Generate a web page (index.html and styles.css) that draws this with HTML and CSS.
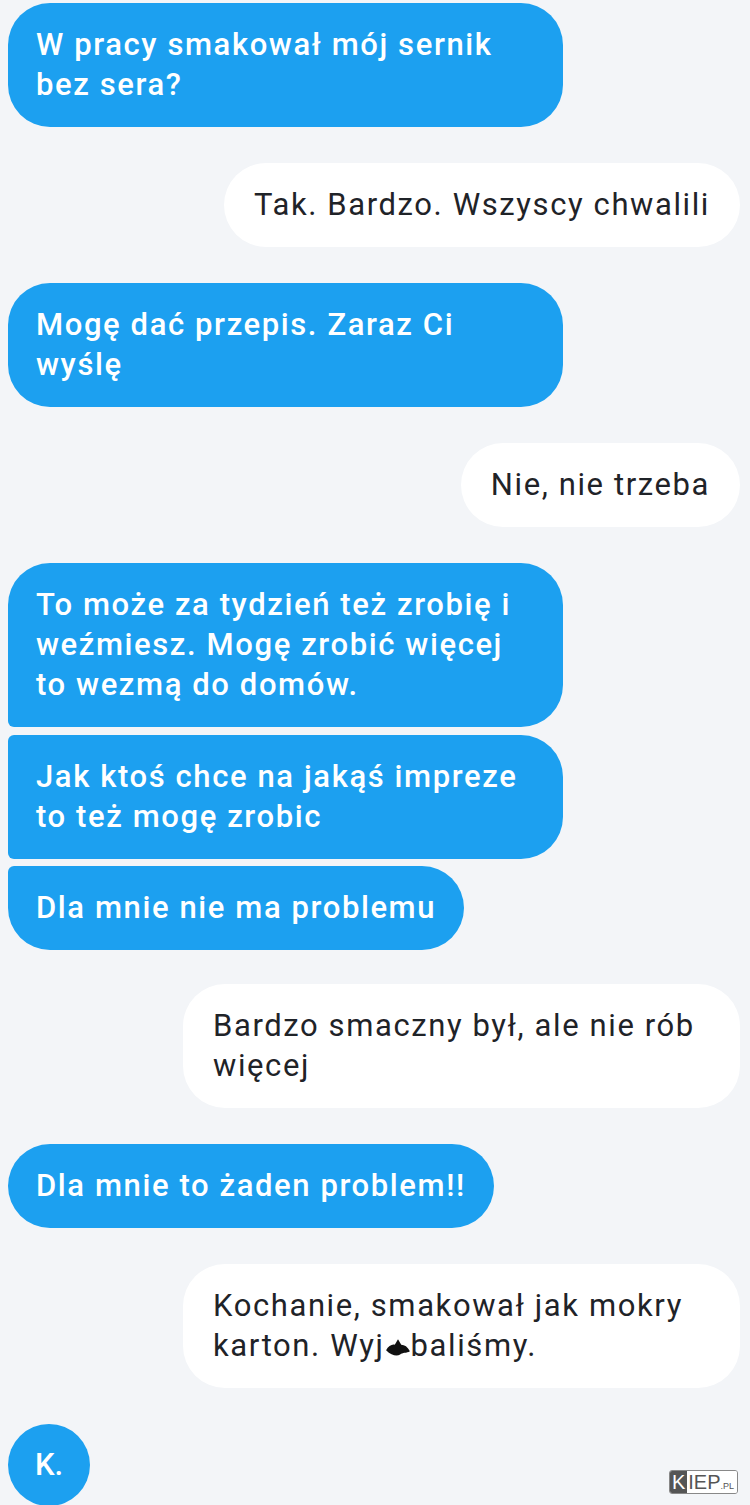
FILE: index.html
```html
<!DOCTYPE html>
<html lang="pl">
<head>
  <meta charset="UTF-8">
  <meta name="viewport" content="width=device-width, initial-scale=1.0">
  <title>Sernik</title>
  <link rel="stylesheet" href="styles.css">
</head>
<body>
  <div class="chat">
    <div class="msg msg-in">W pracy smakował mój sernik bez sera?</div>
    <div class="msg msg-out">Tak. Bardzo. Wszyscy chwalili</div>
    <div class="msg msg-in">Mogę dać przepis. Zaraz Ci wyślę</div>
    <div class="msg msg-out">Nie, nie trzeba</div>
    <div class="msg msg-in group-first">To może za tydzień też zrobię i weźmiesz. Mogę zrobić więcej to wezmą do domów.</div>
    <div class="msg msg-in group-mid">Jak ktoś chce na jakąś impreze to też mogę zrobic</div>
    <div class="msg msg-in group-last">Dla mnie nie ma problemu</div>
    <div class="msg msg-out out-wide">Bardzo smaczny był, ale nie rób więcej</div>
    <div class="msg msg-in">Dla mnie to żaden problem!!</div>
    <div class="msg msg-out out-wide">Kochanie, smakował jak mokry karton. Wyj<svg class="blot" viewBox="0 0 24 18" width="26" height="20"><path d="M1 11 C3 7 7 5 9 6 L12 1 L15 6 C18 6 21 8 23 12 C20 14 16 13 14 15 C11 17 6 16 1 11 Z" fill="#111"/></svg>baliśmy.</div>
    <div class="msg msg-in msg-round">K.</div>
  </div>

  <div class="watermark">
    <span class="wm-k">K</span><span class="wm-rest">IEP<small>.PL</small></span>
  </div>
</body>
</html>
```

FILE: styles.css
```css
html, body {
  margin: 0;
  height: 1505px;
  overflow: hidden;
}

body {
  background-color: #f3f5f8;
  font-family: Roboto, 'Liberation Sans', sans-serif;
  position: relative;
}

.chat {
  display: flex;
  flex-direction: column;
  padding: 3px 10px 0 8px;
}

.msg {
  font-size: 31px;
  letter-spacing: 1.6px;
  line-height: 40px;
  padding: 22px 28px;
  border-radius: 42px;
  margin-top: 36px;
  max-width: 555px;
  box-sizing: border-box;
}

.msg:first-child {
  margin-top: 0;
}

.msg-in {
  align-self: flex-start;
  background-color: #1ca0f0;
  color: #fff;
  font-weight: 500;
}

.msg-out {
  align-self: flex-end;
  background-color: #fff;
  color: #1f2328;
  padding-left: 30px;
  padding-right: 30px;
}

.out-wide {
  max-width: 557px;
}

.group-first {
  border-bottom-left-radius: 6px;
}

.group-mid {
  margin-top: 8px;
  border-top-left-radius: 6px;
  border-bottom-left-radius: 6px;
}

.group-last {
  margin-top: 7px;
  border-top-left-radius: 6px;
}

.group-last + .msg {
  margin-top: 34px;
}

.msg-round {
  width: 82px;
  height: 82px;
  padding: 0;
  border-radius: 50%;
  display: flex;
  align-items: center;
  justify-content: center;
  letter-spacing: 0;
}

.blot {
  vertical-align: -2px;
}

.watermark {
  position: absolute;
  right: 12px;
  bottom: 11px;
  display: flex;
  height: 22px;
  font-family: 'Liberation Sans', Arial, sans-serif;
  font-size: 20px;
  line-height: 22px;
  border-radius: 3px;
  overflow: hidden;
  border: 1px solid #888;
}

.wm-k {
  background-color: #555;
  color: #fff;
  padding: 0 2px;
}

.wm-rest {
  background-color: #fff;
  color: #555;
  padding: 0 3px 0 1px;
}

.wm-rest small {
  font-size: 9px;
}
```
